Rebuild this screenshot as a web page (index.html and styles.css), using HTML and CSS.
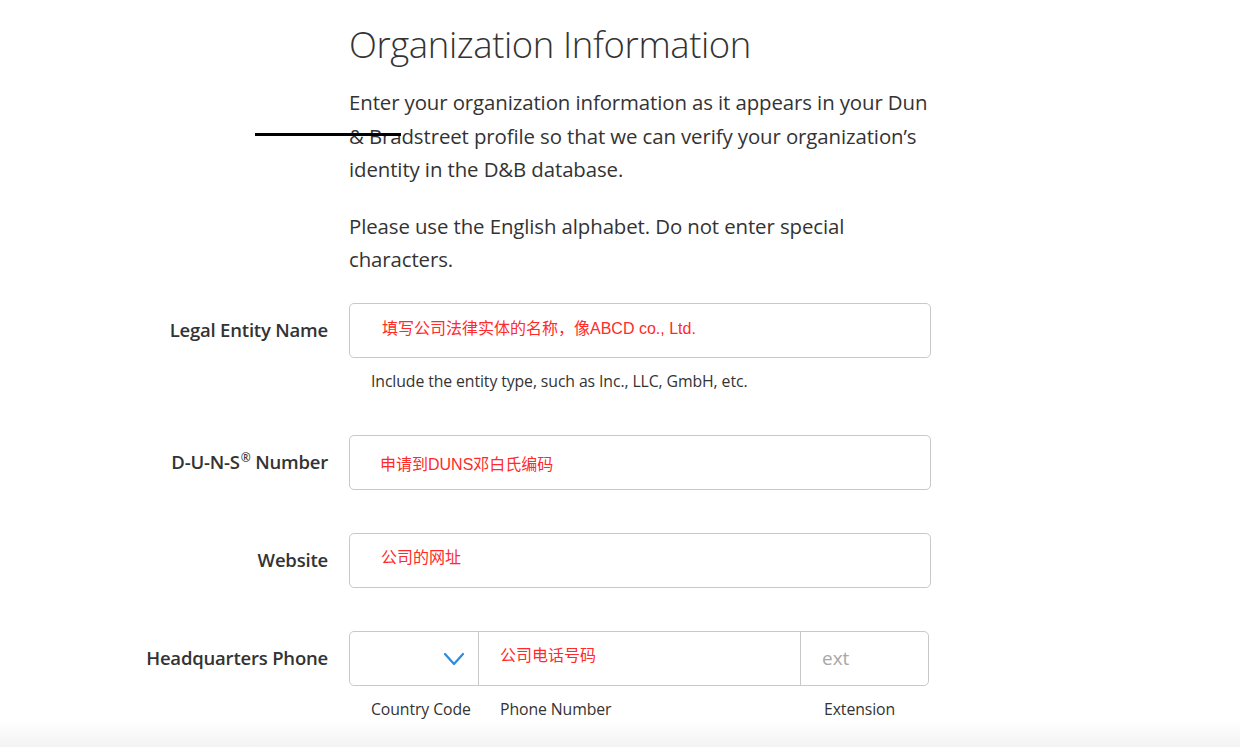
FILE: index.html
```html
<!DOCTYPE html>
<html lang="en">
<head>
<meta charset="utf-8">
<title>Organization Information</title>
<link rel="stylesheet" href="styles.css">
</head>
<body>
<div class="page">
  <div class="intro">
    <h1 class="title">Organization Information</h1>
    <p class="lead">Enter your organization information as it appears in your Dun &amp; Bradstreet profile so that we can verify your organization’s identity in the D&amp;B database.</p>
    <p class="lead second">Please use the English alphabet. Do not enter special characters.</p>
  </div>

  <div class="form">
    <label class="label">Legal Entity Name</label>
    <div class="field">
      <div class="box"><span class="note n1">填写公司法律实体的名称，像ABCD co., Ltd.</span></div>
      <div class="help">Include the entity type, such as Inc., LLC, GmbH, etc.</div>
    </div>

    <label class="label">D-U-N-S<span class="reg">®</span>&nbsp;Number</label>
    <div class="field">
      <div class="box"><span class="note n2">申请到DUNS邓白氏编码</span></div>
    </div>

    <label class="label">Website</label>
    <div class="field">
      <div class="box"><span class="note n3">公司的网址</span></div>
    </div>

    <label class="label">Headquarters Phone</label>
    <div class="field">
      <div class="box phone">
        <div class="seg cc">
          <svg class="chev" width="22" height="14" viewBox="0 0 22 14"><path d="M2 2 L11 12 L20 2" fill="none" stroke="#2a8be0" stroke-width="2.2" stroke-linecap="round" stroke-linejoin="round"/></svg>
        </div>
        <div class="seg num"><span class="note">公司电话号码</span></div>
        <div class="seg ext"><span class="ph">ext</span></div>
      </div>
      <div class="sublabels">
        <span class="sl cc">Country Code</span>
        <span class="sl num">Phone Number</span>
        <span class="sl ext">Extension</span>
      </div>
    </div>
  </div>
  <div class="strike"></div>
</div>
<div class="fade"></div>
</body>
</html>
```
FILE: styles.css
```css
html, body {
  margin: 0;
  padding: 0;
  background: #fff;
}
body {
  font-family: "Open Sans", "Noto Sans", sans-serif;
  color: #333;
  height: 747px;
  overflow: hidden;
  position: relative;
}
.page {
  position: relative;
}
.intro {
  margin-left: 349px;
  width: 582px;
  padding-top: 16px;
}
.title {
  margin: 0;
  font-weight: 300;
  font-size: 36.5px;
  line-height: 56px;
  letter-spacing: -0.4px;
  color: #333;
}
.lead {
  margin: 14px 0 0;
  font-size: 20.4px;
  line-height: 33.5px;
  letter-spacing: -0.1px;
  color: #333;
}
.lead.second {
  margin-top: 23px;
  width: 520px;
}
.form {
  display: grid;
  grid-template-columns: 328px 582px;
  column-gap: 21px;
  row-gap: 43px;
  margin-top: 26px;
}
.label {
  justify-self: end;
  height: 54px;
  display: flex;
  align-items: center;
  font-size: 18.5px;
  font-weight: 600;
  color: #333;
  letter-spacing: -0.2px;
  white-space: nowrap;
}
.reg {
  font-size: 12px;
  align-self: center;
  margin-top: -9px;
  margin-left: 1px;
}
.box {
  height: 53px;
  border: 1px solid #c9c9c9;
  border-radius: 5px;
  display: flex;
  align-items: center;
  box-sizing: content-box;
}
.note {
  font-family: "Liberation Sans", "Noto Sans CJK SC", sans-serif;
  color: #ff2a2a;
  font-size: 16px;
  margin-top: -6px;
}
.n1 { padding-left: 32px; }
.n2 { padding-left: 30px; margin-top: 2px; }
.n3 { padding-left: 31px; margin-top: -8px; }
.help {
  margin-top: 12px;
  padding-left: 22px;
  font-size: 15.8px;
  line-height: 22px;
  color: #333;
  margin-bottom: 0;
  letter-spacing: -0.1px;
}
.phone {
  width: 578px;
  align-items: stretch;
}
.seg {
  display: flex;
  align-items: center;
}
.seg.cc {
  width: 128px;
  justify-content: flex-end;
  border-right: 1px solid #c9c9c9;
}
.chev {
  margin-right: 13px;
  margin-top: 2px;
}
.seg.num {
  width: 322px;
  border-right: 1px solid #c9c9c9;
  padding-left: 21px;
  box-sizing: border-box;
}
.seg.num .note { margin-top: -8px; }
.seg.ext {
  flex: 1;
  padding-left: 21px;
}
.ph {
  font-size: 19px;
  color: #a8a8a8;
}
.sublabels {
  display: flex;
  margin-top: 12px;
  font-size: 15.8px;
  line-height: 22px;
  color: #333;
  letter-spacing: -0.1px;
}
.sl { box-sizing: border-box; }
.sl.cc { padding-left: 22px; width: 129px; }
.sl.num { padding-left: 22px; width: 323px; }
.sl.ext { padding-left: 23px; }
.strike {
  position: absolute;
  left: 255px;
  top: 133px;
  width: 146px;
  height: 3px;
  background: #000;
}
.fade {
  position: absolute;
  left: 0;
  right: 0;
  bottom: 0;
  height: 26px;
  background: linear-gradient(#fff, #f3f3f3);
}
```
